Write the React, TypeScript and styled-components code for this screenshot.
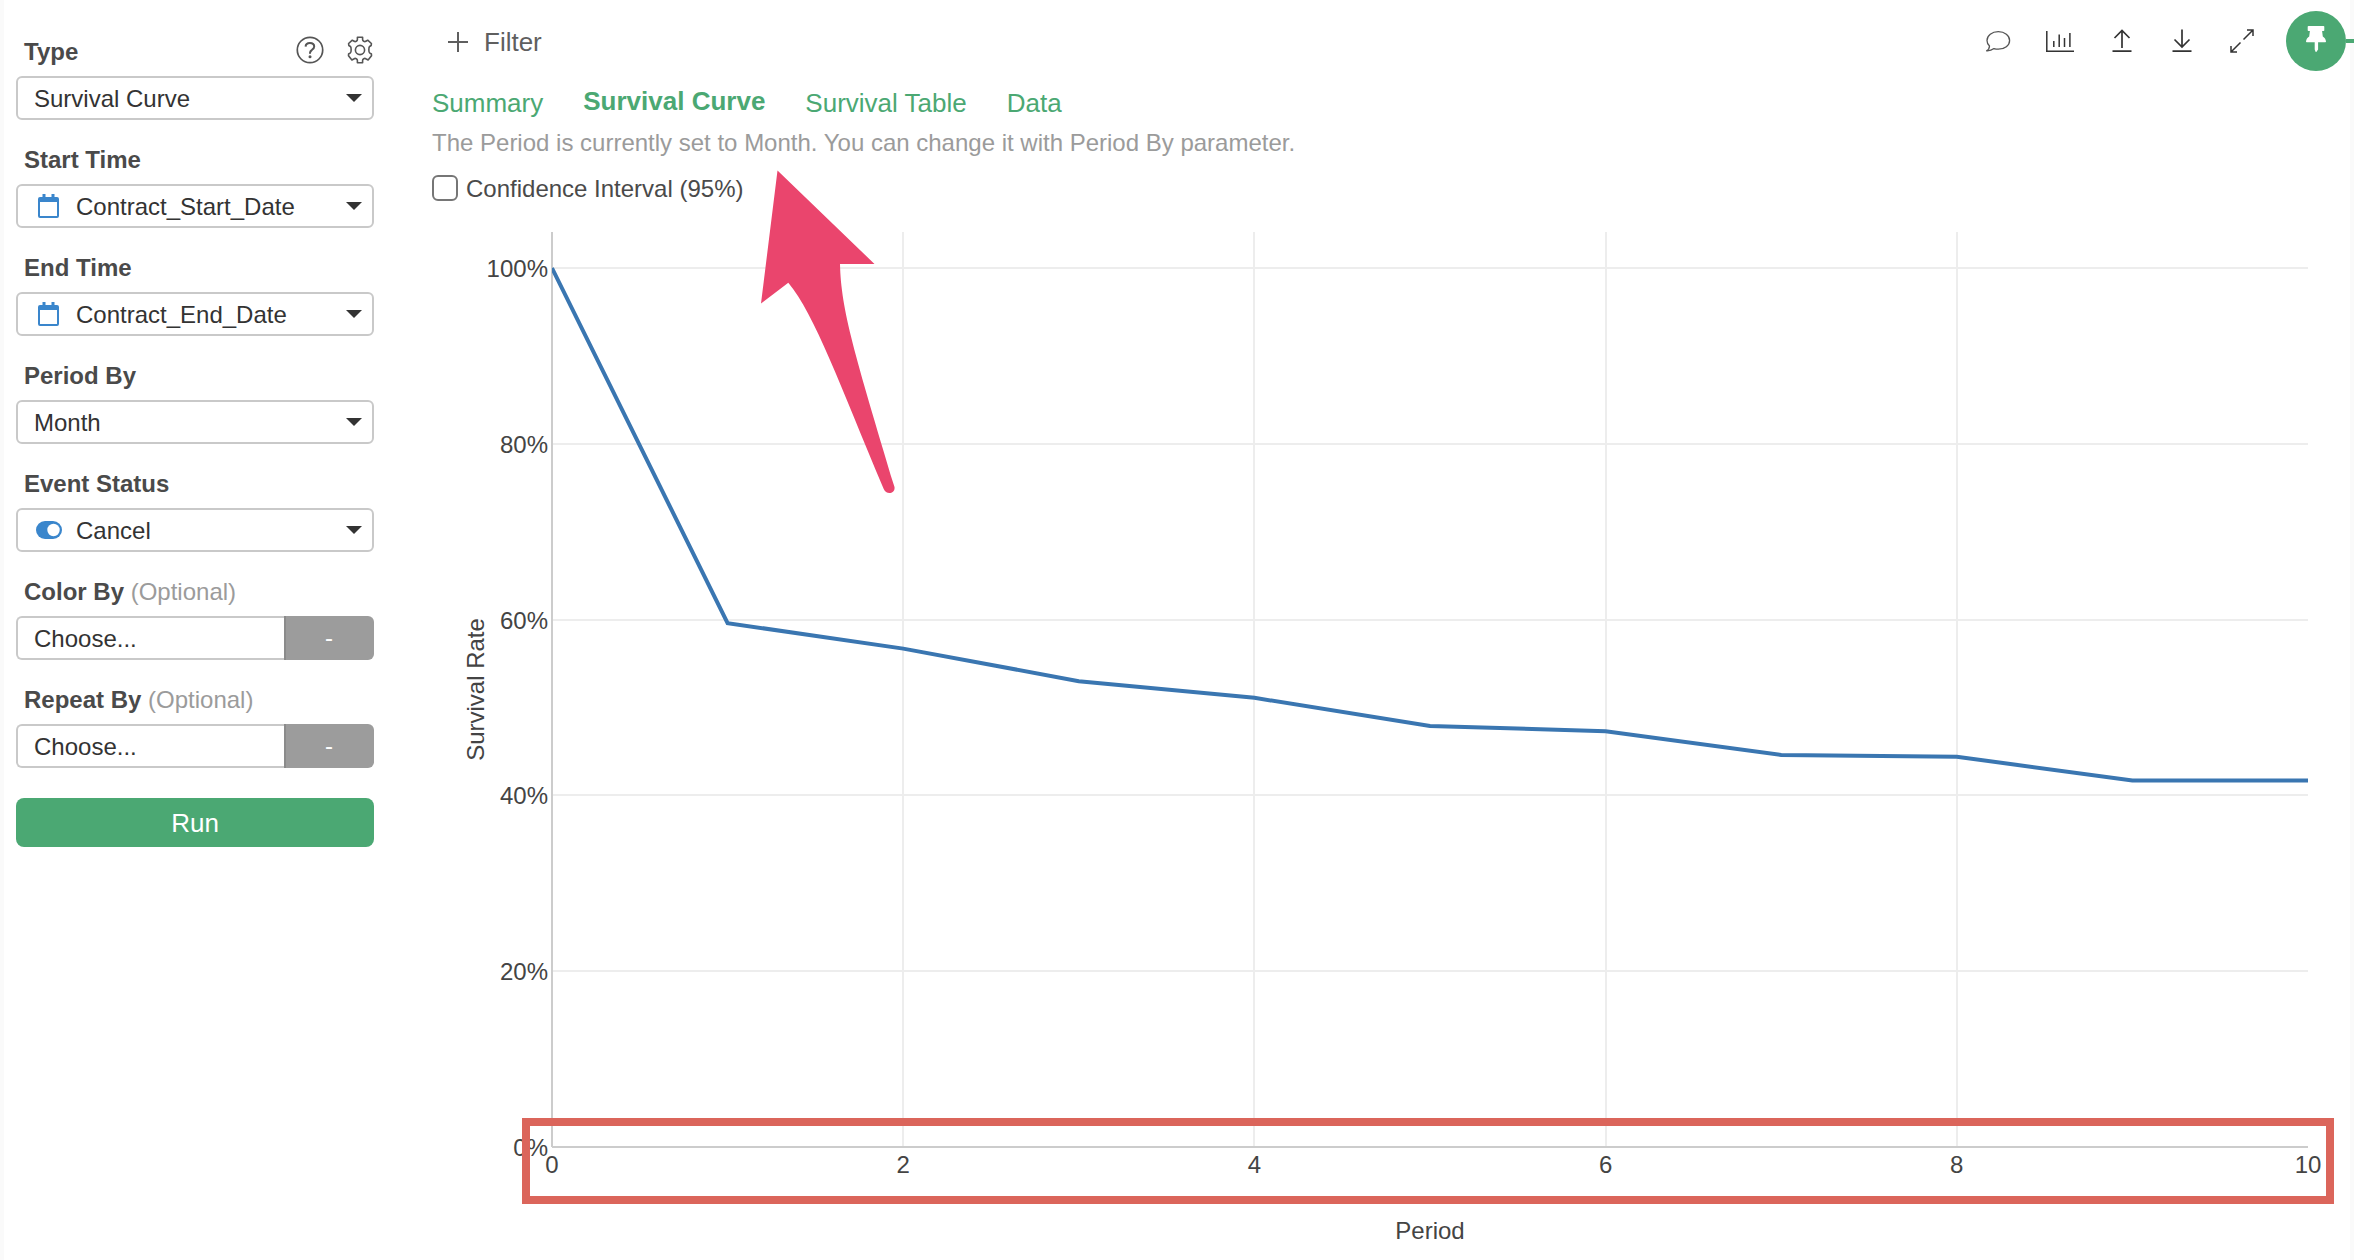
import React, { useId, useLayoutEffect, useRef, useState } from 'react';
import styled, { createGlobalStyle } from 'styled-components';

const green = '#4ba873';
const blue = '#3a86cc';

const GlobalStyle = createGlobalStyle`
  *, *::before, *::after { box-sizing: border-box; }
  body {
    margin: 0;
    background: #ffffff;
    color: #4a4a4a;
    font-family: "Liberation Sans", Arial, sans-serif;
    font-size: 24px;
    line-height: 28px;
  }
  button, select, input { font: inherit; color: inherit; margin: 0; }
`;

const Page = styled.div`
  display: flex;
  min-height: 100vh;
  box-shadow: inset 4px 0 #fafafa, inset -4px 0 #fafafa;
`;

/* ---------- parameter panel ---------- */

const Sidebar = styled.aside`
  flex: none;
  width: 374px;
  padding: 38px 0 0 16px;
`;

const Fields = styled.form`
  display: flex;
  flex-direction: column;
  gap: 26px;
`;

const Field = styled.div`
  display: flex;
  flex-direction: column;
  gap: 10px;
`;

const FieldHead = styled.div`
  display: flex;
  align-items: center;
  justify-content: space-between;
  height: 28px;
  padding-left: 8px;
`;

const FieldLabel = styled.label`
  font-weight: 700;
`;

const Optional = styled.span`
  font-weight: 400;
  color: #9b9b9b;
`;

const HeadActions = styled.div`
  display: flex;
  gap: 22px;
  padding-bottom: 5px;
`;

const IconButton = styled.button<{ $width?: number }>`
  display: flex;
  align-items: center;
  justify-content: center;
  width: ${(p) => p.$width ?? 28}px;
  height: 32px;
  padding: 0;
  border: 0;
  background: none;
  color: #333333;
  cursor: pointer;
`;

const SelectBox = styled.div`
  position: relative;
  display: flex;
`;

const Select = styled.select<{ $icon?: boolean; $joined?: boolean }>`
  appearance: none;
  flex: 1;
  min-width: 0;
  height: 44px;
  padding: 2px 40px 0 ${(p) => (p.$icon ? 58 : 16)}px;
  border: 2px solid #c9c9c9;
  border-radius: ${(p) => (p.$joined ? '6px 0 0 6px' : '6px')};
  border-right-width: ${(p) => (p.$joined ? 0 : 2)}px;
  background: #ffffff;
  color: #333333;
`;

const SelectIcon = styled.span`
  position: absolute;
  left: 20px;
  top: 8px;
  display: flex;
  align-items: center;
  justify-content: center;
  width: 26px;
  height: 28px;
  pointer-events: none;
`;

const Caret = styled.span`
  position: absolute;
  right: 12px;
  top: 18px;
  border: solid transparent;
  border-width: 8px 8px 0;
  border-top-color: #333333;
  pointer-events: none;
`;

const AggregateButton = styled.button`
  flex: none;
  width: 90px;
  padding: 0 2px 0 0;
  border: 0;
  border-left: 2px solid #8b8b8b;
  border-radius: 0 6px 6px 0;
  background: #9c9c9c;
  color: #ffffff;
`;

const RunButton = styled.button`
  height: 49px;
  margin-top: 4px;
  border: 0;
  border-radius: 8px;
  background: ${green};
  color: #ffffff;
  font-size: 26px;
`;

/* ---------- main column ---------- */

const Main = styled.main`
  position: relative;
  flex: 1;
  min-width: 0;
  display: flex;
  flex-direction: column;
  padding-left: 58px;
`;

const Header = styled.header`
  display: flex;
  align-items: center;
  justify-content: space-between;
  padding: 11px 0 0 14px;
`;

const FilterButton = styled.button`
  display: flex;
  align-items: center;
  gap: 14px;
  padding: 2px 0 0;
  border: 0;
  background: none;
  color: #5f5f5f;
  font-size: 26px;
  line-height: 32px;
`;

const Toolbar = styled.div`
  display: flex;
  align-items: center;
  gap: 20px;
`;

const PinGroup = styled.div`
  display: flex;
  align-items: center;
  padding-left: 4px;
`;

const PinButton = styled.button`
  display: flex;
  align-items: center;
  justify-content: center;
  width: 60px;
  height: 60px;
  padding: 0;
  border: 0;
  border-radius: 50%;
  background: ${green};
  color: #ffffff;
`;

const PinLine = styled.span`
  width: 8px;
  height: 4px;
  background: ${green};
`;

const Tabs = styled.nav`
  display: flex;
  align-items: flex-end;
  gap: 40px;
  height: 34px;
  margin-top: 14px;
  font-size: 26px;
  line-height: 32px;
`;

const Tab = styled.a<{ $active?: boolean }>`
  color: ${green};
  text-decoration: none;
  font-weight: ${(p) => (p.$active ? 700 : 400)};
  padding-bottom: ${(p) => (p.$active ? 2 : 0)}px;
`;

const Hint = styled.p`
  margin: 10px 0 0;
  color: #9b9b9b;
`;

const CheckRow = styled.label`
  display: flex;
  align-items: flex-start;
  align-self: flex-start;
  gap: 8px;
  margin-top: 18px;
`;

const Checkbox = styled.input`
  appearance: none;
  width: 26px;
  height: 26px;
  border: 2px solid #767676;
  border-radius: 6px;
  background: #ffffff;
  &:checked { background: ${green}; }
`;

/* ---------- chart ---------- */

const ChartArea = styled.section`
  position: relative;
  flex: 1;
  min-height: 600px;
  margin-right: 4px;
`;

const ChartSvg = styled.svg`
  position: absolute;
  inset: 0;
  display: block;
  width: 100%;
  height: 100%;
  text { fill: #444444; font-size: 24px; }
`;

const AxisHighlight = styled.div`
  position: absolute;
  left: 90px;
  right: 16px;
  bottom: 56px;
  height: 86px;
  border: 8px solid #db655b;
  pointer-events: none;
`;

const ArrowSvg = styled.svg`
  position: absolute;
  left: 386px;
  top: 170px;
  pointer-events: none;
`;

const rates = [100, 59.6, 56.7, 53, 51.1, 47.9, 47.3, 44.6, 44.4, 41.7, 41.7];
const margin = { top: 29, right: 42, bottom: 113, left: 120 };
const maxRate = 104.1;

function SurvivalChart() {
  const ref = useRef<HTMLElement>(null);
  const [size, setSize] = useState({ width: 1200, height: 700 });

  useLayoutEffect(() => {
    const el = ref.current;
    if (!el) return;
    const measure = () => setSize({ width: el.clientWidth, height: el.clientHeight });
    measure();
    const observer = new ResizeObserver(measure);
    observer.observe(el);
    return () => observer.disconnect();
  }, []);

  const right = size.width - margin.right;
  const bottom = size.height - margin.bottom;
  const x = (period: number) => margin.left + (period / 10) * (right - margin.left);
  const y = (rate: number) => bottom - (rate / maxRate) * (bottom - margin.top);
  const middle = (margin.top + bottom) / 2;

  return (
    <ChartArea ref={ref} aria-label="Survival curve chart">
      <ChartSvg>
        <g stroke="#ededed" strokeWidth="2">
          {[20, 40, 60, 80, 100].map((r) => (
            <line key={r} x1={margin.left} x2={right} y1={Math.round(y(r))} y2={Math.round(y(r))} />
          ))}
          {[2, 4, 6, 8].map((p) => (
            <line key={p} x1={Math.round(x(p))} x2={Math.round(x(p))} y1={margin.top} y2={bottom} />
          ))}
        </g>
        <g stroke="#cccccc" strokeWidth="2">
          <line x1={margin.left} x2={margin.left} y1={margin.top} y2={bottom} />
          <line x1={margin.left} x2={right} y1={bottom} y2={bottom} />
        </g>
        <svg
          x={margin.left}
          y={margin.top}
          width={Math.max(right - margin.left, 0)}
          height={Math.max(bottom - margin.top, 0)}
        >
          <polyline
            points={rates.map((r, p) => `${x(p) - margin.left},${y(r) - margin.top}`).join(' ')}
            fill="none"
            stroke="#3a76b1"
            strokeWidth="4"
          />
        </svg>
        {[0, 20, 40, 60, 80, 100].map((r) => (
          <text key={r} x={margin.left - 4} y={Math.round(y(r)) + 9} textAnchor="end">
            {r}%
          </text>
        ))}
        {[0, 2, 4, 6, 8, 10].map((p) => (
          <text key={p} x={x(p)} y={bottom + 26} textAnchor="middle">
            {p}
          </text>
        ))}
        <text x={(margin.left + right) / 2} y={bottom + 92} textAnchor="middle">
          Period
        </text>
        <text transform={`translate(52 ${middle}) rotate(-90)`} textAnchor="middle">
          Survival Rate
        </text>
      </ChartSvg>
      <AxisHighlight />
    </ChartArea>
  );
}

/* ---------- icons ---------- */

const HelpIcon = () => (
  <svg width="28" height="28" viewBox="0 0 28 28" fill="none" stroke="#555555" strokeWidth="1.7">
    <circle cx="14" cy="14" r="12.7" />
    <path d="M9.6 10.6c.1-2.4 1.800-3.700 4.300-3.700 2.500 0 4.300 1.400 4.300 3.500 0 1.600-.8 2.400-2.200 3.400-1.500 1-2 1.700-2 3.300v.7" strokeWidth="2" />
    <circle cx="14" cy="20.800" r="1.500" fill="#555555" stroke="none" />
  </svg>
);

const GearIcon = () => (
  <svg width="28" height="28" viewBox="0 0 28 28" fill="none" stroke="#555555" strokeWidth="1.6" strokeLinejoin="round">
    <circle cx="14" cy="14" r="4.600" />
    <path d="M11.400 1.300h5.200v2.200c0 1.500 1.900 2.600 3.200 1.800l1.900-1.100 3.700 3.300-.2 2-1.600 1c-1 .7-1 5.700 0 6.400l1.800 1.100.1 1.700-3.400 4.300-2.300-1.300c-1.300-.8-3.200.3-3.200 1.800v2.200h-5.200v-2.200c0-1.500-1.900-2.600-3.200-1.800l-2.300 1.300-3.400-4.300.1-1.700 1.800-1.100c1-.7 1-5.700 0-6.400l-1.600-1-.2-2 3.700-3.300 1.900 1.100c1.300.8 3.200-.3 3.200-1.800z" />
  </svg>
);

const CalendarIcon = () => (
  <svg width="22" height="24" viewBox="0 0 22 24" fill={blue}>
    <path d="M2 3h17a2 2 0 0 1 2 2v17a2 2 0 0 1-2 2H2a2 2 0 0 1-2-2V5a2 2 0 0 1 2-2zm0 5v14h17V8z" fillRule="evenodd" />
    <rect x="4.500" width="3" height="5" />
    <rect x="13.500" width="3" height="5" />
  </svg>
);

const ToggleIcon = () => (
  <svg width="26" height="18" viewBox="0 0 26 18">
    <rect width="26" height="18" rx="9" fill={blue} />
    <circle cx="17.500" cy="9" r="6.200" fill="#ffffff" />
  </svg>
);

const PlusIcon = () => (
  <svg width="24" height="24" viewBox="0 0 24 24" stroke="#5f5f5f" strokeWidth="2">
    <path d="M12 2v20M2 12h20" />
  </svg>
);

const CommentIcon = () => (
  <svg width="26" height="24" viewBox="0 0 26 24" fill="none" stroke="#555555" strokeWidth="1.300" strokeLinejoin="round">
    <path d="M13.300 2.600c6.400 0 11.300 3.900 11.300 8.800s-4.900 8.800-11.300 8.800c-1.600 0-3-.2-4.300-.6-2 1.500-4.400 2.400-7.400 2.200 1.800-1 2.800-2.500 2.900-4.800C2.800 15.400 2 13.400 2 11.400c0-4.900 4.900-8.800 11.300-8.800z" />
  </svg>
);

const ChartIcon = () => (
  <svg width="28" height="24" viewBox="4 0 28 24" fill="none" stroke="#333333" strokeWidth="1.500">
    <path d="M4.800 2v20.200M4 22.200h28M11.800 12v6M17.200 5.500V18M22.500 9v9M27.900 4v14" />
  </svg>
);

const UploadIcon = () => (
  <svg width="20" height="24" viewBox="0 0 20 24" fill="none" stroke="#333333" strokeWidth="1.700">
    <path d="M10 19V1.500M2.500 9L10 1.500 17.500 9M.5 22.200h19" />
  </svg>
);

const DownloadIcon = () => (
  <svg width="20" height="24" viewBox="0 0 20 24" fill="none" stroke="#333333" strokeWidth="1.700">
    <path d="M10 .5V18M2.500 10.500L10 18l7.500-7.500M.5 22.200h19" />
  </svg>
);

const ExpandIcon = () => (
  <svg width="24" height="24" viewBox="0 0 24 24" fill="none" stroke="#333333" strokeWidth="1.500">
    <path d="M13.500 10.500L23 1M17 1h6v6M10.500 13.500L1 23M1 17v6h6" />
  </svg>
);

const PinIcon = () => (
  <svg width="20" height="30" viewBox="0 0 20 30" fill="currentColor">
    <path d="M2.500 0h15a.8.800 0 0 1 .8.800v3.400a.8.800 0 0 1-.8.800h-1.400l.7 5.500c1.800 1 3 2.900 3.200 5.100 0 .4-.3.700-.7.700h-7.200v7.200L10.300 26h-.6l-1-2.500v-7.200H.7c-.4 0-.7-.3-.7-.7.2-2.200 1.400-4.100 3.200-5.100L3.900 5H2.500a.8.800 0 0 1-.8-.8V.8A.8.800 0 0 1 2.500 0z" />
  </svg>
);

/* ---------- fields ---------- */

type ParamFieldProps = {
  label: string;
  value: string;
  icon?: React.ReactNode;
  actions?: React.ReactNode;
  optional?: boolean;
};

function ParamField({ label, value, icon, actions, optional }: ParamFieldProps) {
  const id = useId();
  return (
    <Field>
      <FieldHead>
        <FieldLabel htmlFor={id}>
          {label}
          {optional && <Optional> (Optional)</Optional>}
        </FieldLabel>
        {actions && <HeadActions>{actions}</HeadActions>}
      </FieldHead>
      <SelectBox>
        {icon && <SelectIcon>{icon}</SelectIcon>}
        <Select id={id} $icon={!!icon} $joined={optional}>
          <option>{value}</option>
        </Select>
        {optional ? <AggregateButton type="button">-</AggregateButton> : <Caret />}
      </SelectBox>
    </Field>
  );
}

export default function App() {
  return (
    <>
      <GlobalStyle />
      <Page>
        <Sidebar>
          <Fields onSubmit={(e) => e.preventDefault()}>
            <ParamField
              label="Type"
              value="Survival Curve"
              actions={
                <>
                  <IconButton type="button" aria-label="Help"><HelpIcon /></IconButton>
                  <IconButton type="button" aria-label="Settings"><GearIcon /></IconButton>
                </>
              }
            />
            <ParamField label="Start Time" value="Contract_Start_Date" icon={<CalendarIcon />} />
            <ParamField label="End Time" value="Contract_End_Date" icon={<CalendarIcon />} />
            <ParamField label="Period By" value="Month" />
            <ParamField label="Event Status" value="Cancel" icon={<ToggleIcon />} />
            <ParamField label="Color By" value="Choose..." optional />
            <ParamField label="Repeat By" value="Choose..." optional />
            <RunButton type="submit">Run</RunButton>
          </Fields>
        </Sidebar>
        <Main>
          <Header>
            <FilterButton type="button">
              <PlusIcon />
              Filter
            </FilterButton>
            <Toolbar>
              <IconButton $width={40} aria-label="Comment"><CommentIcon /></IconButton>
              <IconButton $width={44} aria-label="Chart"><ChartIcon /></IconButton>
              <IconButton $width={40} aria-label="Upload"><UploadIcon /></IconButton>
              <IconButton $width={40} aria-label="Download"><DownloadIcon /></IconButton>
              <IconButton $width={40} aria-label="Expand"><ExpandIcon /></IconButton>
              <PinGroup>
                <PinButton aria-label="Pin"><PinIcon /></PinButton>
                <PinLine />
              </PinGroup>
            </Toolbar>
          </Header>
          <Tabs>
            <Tab href="#summary">Summary</Tab>
            <Tab href="#curve" $active>Survival Curve</Tab>
            <Tab href="#table">Survival Table</Tab>
            <Tab href="#data">Data</Tab>
          </Tabs>
          <Hint>The Period is currently set to Month. You can change it with Period By parameter.</Hint>
          <CheckRow>
            <Checkbox type="checkbox" />
            Confidence Interval (95%)
          </CheckRow>
          <SurvivalChart />
          <ArrowSvg width="136" height="324" viewBox="760 170 136 324" fill="#ea456d">
            <path d="M777.500 170.500L874.500 264H840C841 310 855 355 894.500 487C895.500 494 886 495.500 883.500 488.500C840 385 815 315 788.300 282.700L761 303.500Z" />
          </ArrowSvg>
        </Main>
      </Page>
    </>
  );
}
